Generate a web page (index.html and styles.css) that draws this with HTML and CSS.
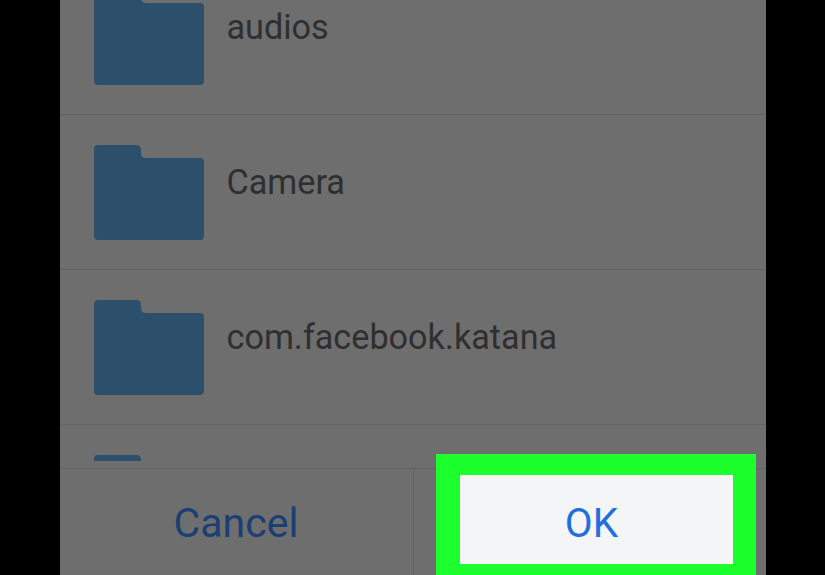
FILE: index.html
```html
<!DOCTYPE html>
<html lang="en">
<head>
    <meta charset="UTF-8">
    <title>Select folder</title>
    <link rel="stylesheet" href="styles.css">
</head>
<body>
    <div class="dialog">
        <div class="folder-list">
            <div class="folder-items">
                <div class="folder-row">
                    <svg class="folder-icon" viewBox="0 0 110 95"><path d="M4 0H42Q47 0 47 5V8Q47 13 52 13H106Q110 13 110 17V91Q110 95 106 95H4Q0 95 0 91V4Q0 0 4 0Z"/></svg>
                    <span class="folder-name">audios</span>
                </div>
                <div class="folder-row">
                    <svg class="folder-icon" viewBox="0 0 110 95"><path d="M4 0H42Q47 0 47 5V8Q47 13 52 13H106Q110 13 110 17V91Q110 95 106 95H4Q0 95 0 91V4Q0 0 4 0Z"/></svg>
                    <span class="folder-name">Camera</span>
                </div>
                <div class="folder-row">
                    <svg class="folder-icon" viewBox="0 0 110 95"><path d="M4 0H42Q47 0 47 5V8Q47 13 52 13H106Q110 13 110 17V91Q110 95 106 95H4Q0 95 0 91V4Q0 0 4 0Z"/></svg>
                    <span class="folder-name">com.facebook.katana</span>
                </div>
                <div class="folder-row">
                    <svg class="folder-icon" viewBox="0 0 110 95"><path d="M4 0H42Q47 0 47 5V8Q47 13 52 13H106Q110 13 110 17V91Q110 95 106 95H4Q0 95 0 91V4Q0 0 4 0Z"/></svg>
                </div>
            </div>
        </div>
        <div class="dialog-footer">
            <div class="footer-btn cancel-btn">Cancel</div>
            <div class="footer-btn ok-slot"></div>
        </div>
        <!-- highlighted OK button sits over the dimmed dialog -->
        <div class="ok-highlight">
            <div class="ok-btn">OK</div>
        </div>
    </div>
</body>
</html>
```

FILE: styles.css
```css
html, body {
    height: 100%;
}

body {
    margin: 0;
    background-color: #000;
    font-family: Roboto, "Liberation Sans", sans-serif;
    overflow: hidden;
}

.dialog {
    position: relative;
    display: flex;
    flex-direction: column;
    width: 706px;
    height: 575px;
    margin-left: 60px;
    background-color: #6e6e6e;
}

.folder-list {
    height: 461px;
    overflow: hidden;
}

.folder-items {
    margin-top: -40px;
}

.folder-row {
    display: flex;
    align-items: flex-start;
    gap: 22.5px;
    height: 154px;
    padding-left: 34px;
    border-bottom: 1px solid #626262;
}

.folder-icon {
    flex: none;
    width: 110px;
    height: 95px;
    margin-top: 30px;
    fill: #2c506b;
}

.folder-name {
    margin-top: 43px;
    font-size: 34.2px;
    line-height: 48px;
    color: #2f2f2f;
}

.dialog-footer {
    display: flex;
    height: 106px;
    margin-top: 7px;
    border-top: 1px solid #626262;
}

.footer-btn {
    display: flex;
    align-items: center;
    justify-content: center;
    font-size: 41px;
}

.cancel-btn {
    width: 354px;
    padding: 1px 1px 0 0;
    box-sizing: border-box;
    border-right: 1px solid #626262;
    color: #1a3f72;
}

.ok-slot {
    flex: 1;
}

.ok-highlight {
    position: absolute;
    left: 376px;
    top: 454px;
    width: 320px;
    height: 131px;
    box-sizing: border-box;
    padding: 21px 23px 21px 24px;
    background-color: #1eff2e;
}

.ok-btn {
    display: flex;
    align-items: center;
    justify-content: center;
    height: 100%;
    box-sizing: border-box;
    padding: 7px 10px 0 0;
    background-color: #f3f5f7;
    color: #1f6fdc;
    font-size: 40.5px;
}
```
